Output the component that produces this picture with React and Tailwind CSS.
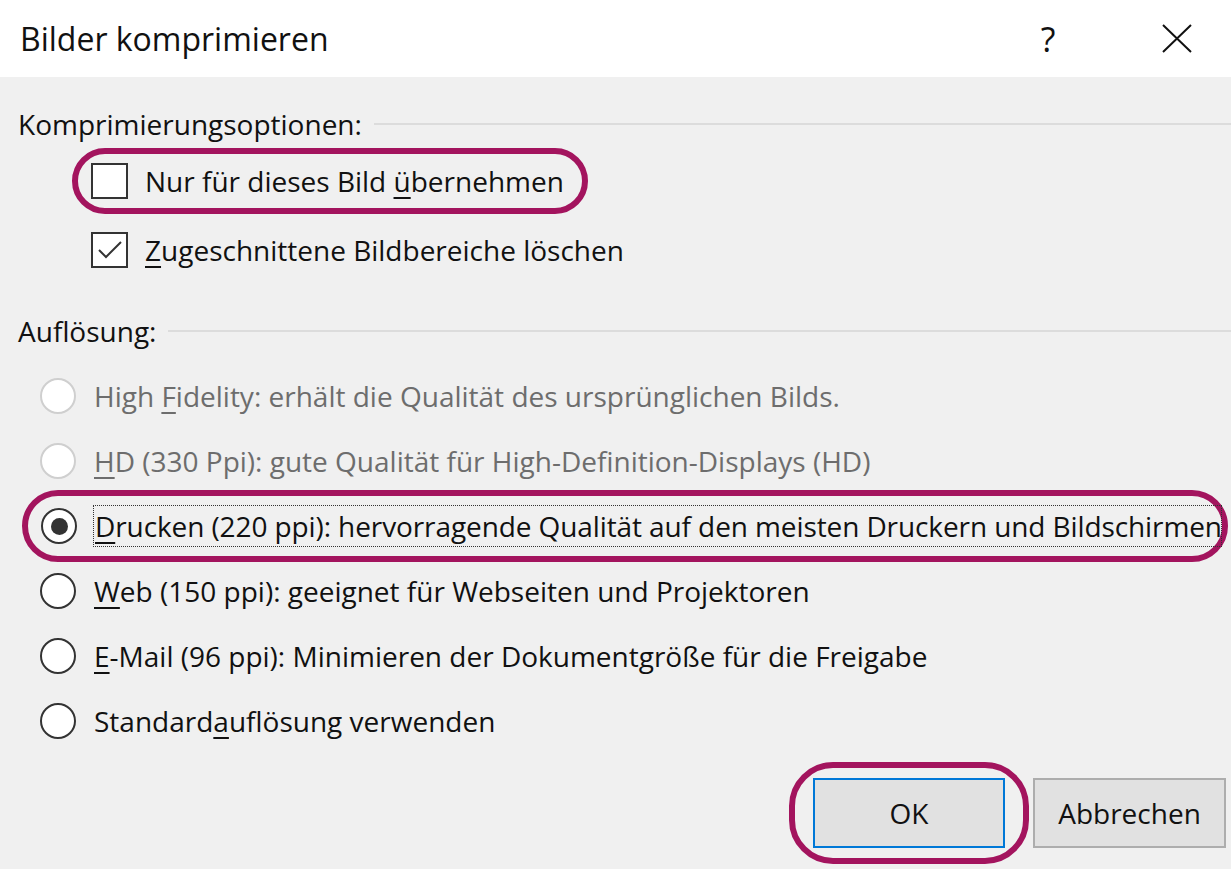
import React from "react";

const RING = "border-[6px] border-[#a3145e]";

function Underlined({ text, at }) {
    // underline one access-key letter
    return (
        <>
            {text.slice(0, at)}
            <span className="underline underline-offset-[5px] decoration-2">{text[at]}</span>
            {text.slice(at + 1)}
        </>
    );
}

function GroupHeader({ label }) {
    return (
        <div className="flex items-center gap-3">
            <span>{label}</span>
            <div className="h-[2px] flex-1 bg-[#dcdcdc]" />
        </div>
    );
}

function Checkbox({ checked }) {
    return (
        <div className="w-[37px] h-[36px] border-[2px] border-[#333] bg-white flex items-center justify-center shrink-0">
            {checked && (
                <svg width="26" height="22" viewBox="0 0 26 22">
                    <path d="M2 11 L9 18 L24 3" fill="none" stroke="#333" strokeWidth="2" />
                </svg>
            )}
        </div>
    );
}

function Radio({ checked, disabled }) {
    return (
        <div
            className={
                "w-[36px] h-[36px] rounded-full border-[2px] bg-white flex items-center justify-center shrink-0 " +
                (disabled ? "border-[#cfcfcf]" : "border-[#333]")
            }
        >
            {checked && <div className="w-[17px] h-[17px] rounded-full bg-[#333]" />}
        </div>
    );
}

const OPTIONS = [
    { text: "High Fidelity: erhält die Qualität des ursprünglichen Bilds.", at: 5, disabled: true },
    { text: "HD (330 Ppi): gute Qualität für High-Definition-Displays (HD)", at: 0, disabled: true },
    { text: "Drucken (220 ppi): hervorragende Qualität auf den meisten Druckern und Bildschirmen", at: 0, checked: true },
    { text: "Web (150 ppi): geeignet für Webseiten und Projektoren", at: 0 },
    { text: "E-Mail (96 ppi): Minimieren der Dokumentgröße für die Freigabe", at: 0 },
    { text: "Standardauflösung verwenden", at: 8 },
];

export default function App() {
    return (
        <div
            className="w-[1231px] h-[869px] bg-[#f0f0f0] text-[#111] text-[28px] leading-[42px] overflow-hidden"
            style={{ fontFamily: '"Open Sans", "Noto Sans", sans-serif' }}
        >
            {/* title bar */}
            <div className="h-[77px] bg-white flex items-center pl-[20px] pr-[39px]">
                <div className="flex-1 text-[32px]">Bilder komprimieren</div>
                <div className="text-[34px] w-[24px] text-center mr-[102px]">?</div>
                <svg width="30" height="29" viewBox="0 0 30 29">
                    <path d="M1 1 L29 28 M29 1 L1 28" stroke="#111" strokeWidth="2" />
                </svg>
            </div>

            <div className="pl-[18px] pt-[26px]">
                <GroupHeader label="Komprimierungsoptionen:" />

                <div className="flex flex-col gap-[15px] mt-[3px]">
                    <div className={"self-start ml-[54px] rounded-full pl-[13px] pr-[18px] py-[6px] flex items-center gap-[17px] " + RING}>
                        <Checkbox />
                        <span>
                            <Underlined text="Nur für dieses Bild übernehmen" at={20} />
                        </span>
                    </div>
                    <div className="ml-[73px] flex items-center gap-[17px]">
                        <Checkbox checked />
                        <span>
                            <Underlined text="Zugeschnittene Bildbereiche löschen" at={0} />
                        </span>
                    </div>
                </div>

                <div className="mt-[39px]">
                    <GroupHeader label="Auflösung:" />
                </div>

                <div className="flex flex-col gap-[23px] mt-[23px]">
                    {OPTIONS.map((o) =>
                        o.checked ? (
                            <div
                                key={o.text}
                                className={"-my-[15px] ml-[4px] mr-[3px] rounded-full py-[9px] pl-[13px] pr-[1px] flex items-center gap-[16px] " + RING}
                            >
                                <Radio checked />
                                <span className="flex-1 whitespace-nowrap tracking-[-0.1px] outline-dotted outline-1 outline-[#333] -outline-offset-1 pl-[2px]">
                                    <Underlined text={o.text} at={o.at} />
                                </span>
                            </div>
                        ) : (
                            <div key={o.text} className="ml-[22px] flex items-center gap-[18px]">
                                <Radio disabled={o.disabled} />
                                <span className={"whitespace-nowrap " + (o.disabled ? "text-[#6d6d6d]" : "")}>
                                    <Underlined text={o.text} at={o.at} />
                                </span>
                            </div>
                        )
                    )}
                </div>

                <div className="flex justify-end items-center gap-[4px] pr-[5px] mt-[20px]">
                    <div className={"rounded-[44px] px-[18px] py-[10px] " + RING}>
                        <button className="w-[192px] h-[70px] bg-[#e1e1e1] border-[2px] border-[#0078d7] text-[28px] block">
                            OK
                        </button>
                    </div>
                    <button className="w-[193px] h-[70px] bg-[#e1e1e1] border-[2px] border-[#adadad] text-[28px]">
                        Abbrechen
                    </button>
                </div>
            </div>
        </div>
    );
}
